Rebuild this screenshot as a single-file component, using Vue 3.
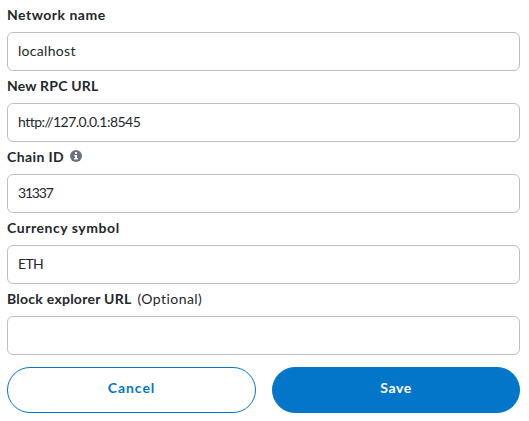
<script setup>
import { ref } from 'vue'

const fields = ref([
  { id: 'name', label: 'Network name', value: 'localhost' },
  { id: 'rpc', label: 'New RPC URL', value: 'http://127.0.0.1:8545' },
  { id: 'chain', label: 'Chain ID', value: '31337', info: true },
  { id: 'symbol', label: 'Currency symbol', value: 'ETH' },
  { id: 'explorer', label: 'Block explorer URL', value: '', optional: true },
])
</script>

<template>
  <form class="network-form" @submit.prevent>
    <div v-for="f in fields" :key="f.id" class="field" :class="f.id">
      <label class="heading" :for="f.id">
        <span class="title">{{ f.label }}</span>
        <svg v-if="f.info" class="info" viewBox="0 0 12 12">
          <circle cx="6" cy="6" r="6" fill="#6a737d" />
          <path d="M5 2h2v2H5zM4.3 5H7v3h.8v1.5H4.2V8H5V6.3h-.7z" fill="#fff" />
        </svg>
        <span v-if="f.optional" class="optional">(Optional)</span>
      </label>
      <input :id="f.id" v-model="f.value" class="input" type="text" spellcheck="false" />
    </div>
    <div class="actions">
      <button type="button" class="button cancel">Cancel</button>
      <button type="submit" class="button save">Save</button>
    </div>
  </form>
</template>

<style>
body {
  background: #fff;
}
</style>

<style scoped>
.network-form {
  box-sizing: border-box;
  width: 529px;
  height: 421px;
  padding: 0 9px 0 7px;
  font-family: Lato, "Liberation Sans", sans-serif;
  font-size: 14px;
  color: #24272a;
}
.heading {
  display: flex;
  align-items: center;
  height: 32px;
  box-sizing: border-box;
  padding-bottom: 4px;
  white-space: nowrap;
}
.title {
  font-weight: 700;
  letter-spacing: 0.5px;
}
.rpc .title {
  letter-spacing: 0.2px;
}
.chain .title {
  letter-spacing: 0.4px;
}
.symbol .title {
  letter-spacing: 0.55px;
}
.explorer .title {
  letter-spacing: 0.25px;
}
.info {
  width: 12px;
  height: 12px;
  margin-left: 6px;
}
.optional {
  margin-left: 6px;
  letter-spacing: 0.45px;
}
.input {
  display: block;
  box-sizing: border-box;
  width: 100%;
  height: 39px;
  margin: 0;
  padding: 0 10px 2px;
  border: 1px solid #bbc0c5;
  border-radius: 6px;
  outline: none;
  background: #fff;
  color: #24272a;
  font: inherit;
  letter-spacing: 0.3px;
}
.rpc .input {
  letter-spacing: -0.52px;
}
.chain .input {
  letter-spacing: -1.2px;
}
.symbol .input {
  letter-spacing: -0.7px;
}
.actions {
  display: grid;
  grid-template-columns: 249px 248px;
  gap: 16px;
  padding-top: 12px;
}
.button {
  box-sizing: border-box;
  height: 46px;
  margin: 0;
  padding: 0 0 5px;
  border: 1px solid #0376c9;
  border-radius: 23px;
  font: inherit;
  font-weight: 700;
  letter-spacing: 0.6px;
}
.cancel {
  background: #fff;
  color: #0376c9;
  letter-spacing: 0.95px;
}
.save {
  background: #0376c9;
  color: #fff;
}
</style>
